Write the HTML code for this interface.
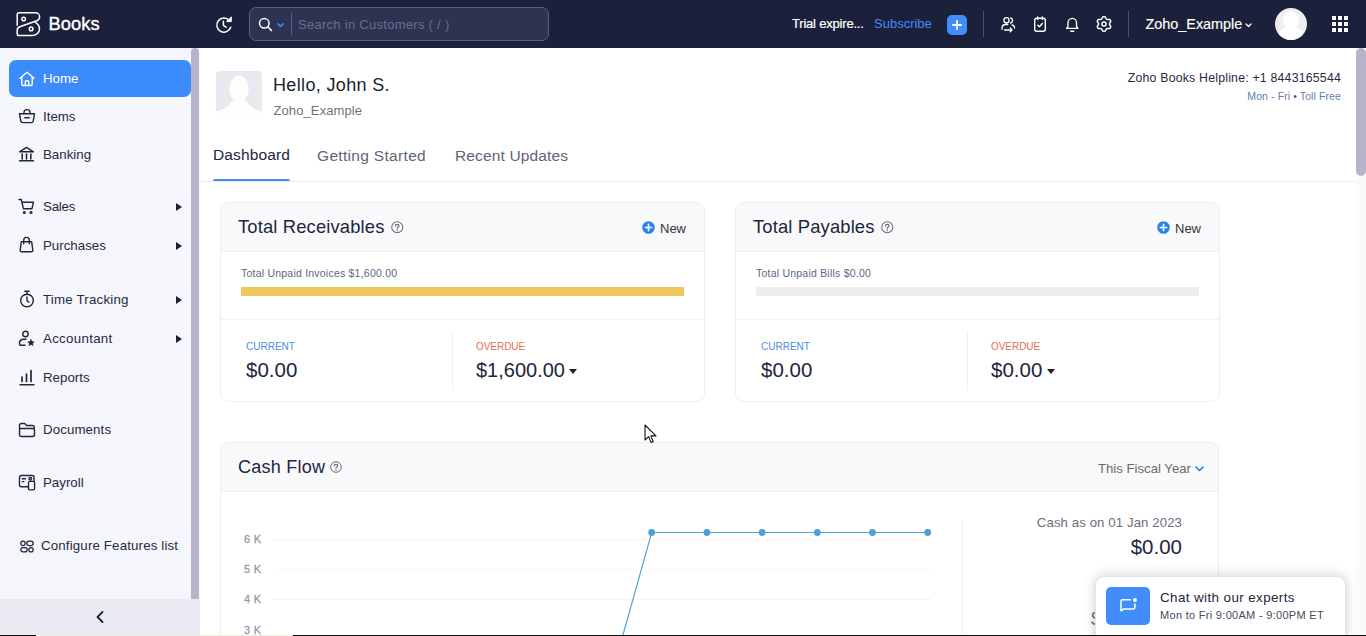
<!DOCTYPE html>
<html><head><meta charset="utf-8">
<style>
*{box-sizing:border-box;margin:0;padding:0}
html,body{width:1366px;height:636px;overflow:hidden;background:#fff;font-family:"Liberation Sans",sans-serif;color:#21263c}
.abs{position:absolute}
#top{position:absolute;left:0;top:0;width:1366px;height:47.600px;background:#1b213a}
#side{position:absolute;left:0;top:48px;width:200px;height:588px;background:#f5f5fc}
#main{position:absolute;left:200px;top:48px;width:1166px;height:588px;background:#fff}
.t{position:absolute;white-space:nowrap;line-height:1}
svg{position:absolute;overflow:visible}
.nav{position:absolute;left:43px;font-size:13.300px;color:#262b42;white-space:nowrap;line-height:1;letter-spacing:0}
.arr{position:absolute;left:176px;width:0;height:0;border-left:6.500px solid #1d2136;border-top:4px solid transparent;border-bottom:4px solid transparent}
.card{position:absolute;border:1px solid #ededf3;border-radius:9px;background:#fff;overflow:hidden}
.chead{position:absolute;left:0;top:0;right:0;height:49px;background:#f9f9fc;border-bottom:1px solid #efeff4}
</style></head><body>
<div id="top">
<!-- logo -->
<svg style="left:16px;top:12px" width="24" height="24" viewBox="0 0 24 24" fill="none" stroke="#fff" stroke-width="1.500" stroke-linecap="round" stroke-linejoin="round">
<path d="M1.200 13.200V2.600c0-1 .8-1.800 1.800-1.800h16.500c2.400 0 4.100 1.800 4.100 4 0 1.900-1.100 3.300-2.800 4L3.800 14.800C2.200 15.400 1.200 16.500 1.200 18.200v3.500c0 1 .8 1.800 1.800 1.800h13.500c4 0 7-3 7-6.600 0-2.800-1.500-5.200-4.500-7.100"/>
<circle cx="7.700" cy="7" r="1.800"/><circle cx="15.100" cy="16.900" r="1.800"/>
</svg>
<div class="t" style="left:48.600px;top:15px;font-size:18.300px;color:#fff;-webkit-text-stroke:.38px #fff;letter-spacing:.05px">Books</div>
<!-- history -->
<svg style="left:215px;top:16px" width="18" height="18" viewBox="0 0 18 18" fill="none" stroke="#fff" stroke-width="1.500" stroke-linecap="round" stroke-linejoin="round">
<path d="M14.200 4.300A7.100 7.100 0 1 0 15.700 11.300"/><path d="M16.300 1.300V5.600H12z" fill="#fff" stroke-width="1"/><path d="M8.400 5.300v4l2.600 1.900"/>
</svg>
<!-- search -->
<div class="abs" style="left:249px;top:7px;width:300px;height:34px;border:1px solid #586082;border-radius:7px;background:#2d3350"></div>
<svg style="left:258px;top:17px" width="15" height="15" viewBox="0 0 15 15" fill="none" stroke="#fff" stroke-width="1.500" stroke-linecap="round"><circle cx="6.300" cy="6.300" r="4.800"/><path d="M10 10l3.400 3.400"/></svg>
<svg style="left:277px;top:22.700px" width="7" height="5.200" viewBox="0 0 8 6" fill="none" stroke="#408dfb" stroke-width="1.700" stroke-linecap="round" stroke-linejoin="round"><path d="M1 1l3 3 3-3"/></svg>
<div class="abs" style="left:291px;top:13px;width:1px;height:22px;background:#566083"></div>
<div class="t" id="ph" style="left:298px;top:18px;font-size:13px;letter-spacing:.28px;color:#69708f">Search in Customers ( / )</div>
<!-- right -->
<div class="t" id="trial" style="left:792px;top:17px;-webkit-text-stroke:.2px #fff;font-size:13px;letter-spacing:-.2px;color:#fff">Trial expire...</div>
<div class="t" id="subs" style="left:874px;top:17px;font-size:13px;color:#408dfb">Subscribe</div>
<div class="abs" style="left:947px;top:14.500px;width:20px;height:20.500px;border-radius:5px;background:#408dfb"></div>
<svg style="left:952px;top:19.700px" width="10" height="10" viewBox="0 0 10 10" stroke="#fff" stroke-width="1.800" stroke-linecap="round"><path d="M5 1v8M1 5h8"/></svg>
<div class="abs" style="left:983px;top:11px;width:1px;height:26px;background:#4a5170"></div>
<!-- users icon -->
<svg style="left:1000.500px;top:16.200px" width="15" height="16" preserveAspectRatio="none" viewBox="0 0 17 17" fill="none" stroke="#fff" stroke-width="1.500" stroke-linecap="round" stroke-linejoin="round">
<circle cx="6.200" cy="4.600" r="2.900"/><path d="M1.200 14.200v-1.500c0-2.200 1.800-3.600 4-3.600h2.500"/><path d="M10.800 2c1.400.3 2.300 1.400 2.300 2.700s-.9 2.400-2.300 2.700"/><path d="M12.600 9.600c1.600.4 2.800 1.500 2.800 3.200"/><path d="M4 14.800h8.500M10.500 12.800l2 2-2 2"/>
</svg>
<!-- clipboard -->
<svg style="left:1032px;top:15px" width="16" height="18" viewBox="0 0 16 18" fill="none" stroke="#fff" stroke-width="1.400" stroke-linecap="round" stroke-linejoin="round">
<rect x="2.700" y="3.300" width="10.600" height="13" rx="2"/><path d="M5.700 2v2.600M10.300 2v2.600"/><path d="M5.800 10.200l1.600 1.600 3-3.200"/>
</svg>
<!-- bell -->
<svg style="left:1064.800px;top:15.600px" width="14.500" height="17" preserveAspectRatio="none" viewBox="0 0 16 18" fill="none" stroke="#fff" stroke-width="1.500" stroke-linecap="round" stroke-linejoin="round"><path d="M3.300 10.500V7.200a4.700 4.700 0 0 1 9.400 0v3.300c0 1 .6 1.700 1.600 2.600H1.700c1-.9 1.600-1.600 1.600-2.600z"/><path d="M6.300 16.200h3.400"/></svg>
<!-- gear -->
<svg style="left:1096.200px;top:16.200px" width="16" height="16" viewBox="0 0 16 16" fill="none" stroke="#fff" stroke-width="1.450" stroke-linejoin="round"><path d="M8.00 0.60 L8.39 0.64 L8.76 0.75 L9.12 0.95 L9.44 1.23 L9.67 1.77 L9.85 2.31 L10.06 2.62 L10.28 2.87 L10.51 3.07 L10.75 3.24 L11.01 3.36 L11.30 3.46 L11.62 3.52 L12.00 3.56 L12.56 3.44 L13.14 3.37 L13.55 3.51 L13.89 3.72 L14.18 3.99 L14.41 4.30 L14.57 4.65 L14.66 5.04 L14.67 5.44 L14.58 5.86 L14.23 6.33 L13.85 6.76 L13.69 7.10 L13.58 7.41 L13.52 7.71 L13.50 8.00 L13.52 8.29 L13.58 8.59 L13.69 8.90 L13.85 9.24 L14.23 9.67 L14.58 10.14 L14.67 10.56 L14.66 10.96 L14.57 11.35 L14.41 11.70 L14.18 12.01 L13.89 12.28 L13.55 12.49 L13.14 12.63 L12.56 12.56 L12.00 12.44 L11.62 12.48 L11.30 12.54 L11.01 12.64 L10.75 12.76 L10.51 12.93 L10.28 13.13 L10.06 13.38 L9.85 13.69 L9.67 14.23 L9.44 14.77 L9.12 15.05 L8.76 15.25 L8.39 15.36 L8.00 15.40 L7.61 15.36 L7.24 15.25 L6.88 15.05 L6.56 14.77 L6.33 14.23 L6.15 13.69 L5.94 13.38 L5.72 13.13 L5.49 12.93 L5.25 12.76 L4.99 12.64 L4.70 12.54 L4.38 12.48 L4.00 12.44 L3.44 12.56 L2.86 12.63 L2.45 12.49 L2.11 12.28 L1.82 12.01 L1.59 11.70 L1.43 11.35 L1.34 10.96 L1.33 10.56 L1.42 10.14 L1.77 9.67 L2.15 9.24 L2.31 8.90 L2.42 8.59 L2.48 8.29 L2.50 8.00 L2.48 7.71 L2.42 7.41 L2.31 7.10 L2.15 6.76 L1.77 6.33 L1.42 5.86 L1.33 5.44 L1.34 5.04 L1.43 4.65 L1.59 4.30 L1.82 3.99 L2.11 3.72 L2.45 3.51 L2.86 3.37 L3.44 3.44 L4.00 3.56 L4.38 3.52 L4.70 3.46 L4.99 3.36 L5.25 3.24 L5.49 3.07 L5.72 2.87 L5.94 2.62 L6.15 2.31 L6.33 1.77 L6.56 1.23 L6.88 0.95 L7.24 0.75 L7.61 0.64Z"/><circle cx="8" cy="8" r="2.100"/></svg>
<div class="abs" style="left:1128px;top:11px;width:1px;height:26px;background:#4a5170"></div>
<div class="t" id="org" style="left:1145.500px;top:17px;font-size:14.400px;-webkit-text-stroke:.15px #fff;color:#fff">Zoho_Example</div>
<svg style="left:1245px;top:22.500px" width="7" height="5" viewBox="0 0 7 5" fill="none" stroke="#fff" stroke-width="1.300" stroke-linecap="round" stroke-linejoin="round"><path d="M1 1l2.500 2.500L6 1"/></svg>
<!-- avatar -->
<div class="abs" style="left:1275px;top:8px;width:32px;height:32px;border-radius:50%;background:#eeeef2;overflow:hidden">
<div class="abs" style="left:8px;top:3px;width:16px;height:19px;border-radius:50%;background:#fff"></div>
<div class="abs" style="left:3px;top:19px;width:26px;height:20px;border-radius:10px 10px 0 0;background:#fff"></div>
</div>
<!-- grid -->
<svg style="left:1332px;top:16px" width="16" height="16" viewBox="0 0 16 16" fill="#fff"><rect x="0" y="0" width="4" height="4"/><rect x="6" y="0" width="4" height="4"/><rect x="12" y="0" width="4" height="4"/><rect x="0" y="6" width="4" height="4"/><rect x="6" y="6" width="4" height="4"/><rect x="12" y="6" width="4" height="4"/><rect x="0" y="12" width="4" height="4"/><rect x="6" y="12" width="4" height="4"/><rect x="12" y="12" width="4" height="4"/></svg>
</div>
<div id="side">
<div class="abs" style="left:9px;top:12px;width:182px;height:37px;border-radius:7px;background:#3c8bfb"></div>
<!-- home -->
<svg style="left:19px;top:22.8px" width="16" height="16" viewBox="0 0 16 16" fill="none" stroke="#fff" stroke-width="1.400" stroke-linecap="round" stroke-linejoin="round"><path d="M1 7.200L8 1.200l7 6"/><path d="M2.800 6v7.300c0 .7.500 1.200 1.200 1.200h8c.7 0 1.200-.5 1.200-1.200V6"/><path d="M6.300 14.300v-3.600c0-.5.400-.9.900-.9h1.600c.5 0 .9.400.9.900v3.600"/></svg>
<div class="nav" style="top:24px;color:#fff">Home</div>
<!-- items -->
<svg style="left:18px;top:59.8px" width="18" height="16" viewBox="0 0 18 16" stroke="#21263c" fill="none" stroke-width="1.400" stroke-linecap="round" stroke-linejoin="round"><path d="M1.500 5.800h15l-1.300 7.200c-.2 1-.9 1.600-1.900 1.600H4.700c-1 0-1.700-.6-1.900-1.600z"/><path d="M6 5.600V4.200c0-1.500 1.200-2.600 3-2.600s3 1.100 3 2.600v1.400"/><path d="M6.800 9.800h4.400"/></svg>
<div class="nav" style="top:62px">Items</div>
<!-- banking -->
<svg style="left:18px;top:97.8px" width="17" height="16" viewBox="0 0 17 16" stroke="#21263c" fill="none" stroke-width="1.400" stroke-linecap="round" stroke-linejoin="round"><path d="M1.500 5.800L8.500 1.300l7 4.500z"/><path d="M4.200 8v5M8.500 8v5M12.800 8v5" stroke-width="1.600"/><path d="M1.500 14.800h14"/></svg>
<div class="nav" style="top:100px">Banking</div>
<!-- sales -->
<svg style="left:18px;top:149.8px" width="17" height="17" viewBox="0 0 17 17" stroke="#21263c" fill="none" stroke-width="1.400" stroke-linecap="round" stroke-linejoin="round"><path d="M1 1.500h2.200l2.300 9.300h8.400l1.600-6.600H4.300"/><circle cx="6.300" cy="14.500" r=".9"/><circle cx="13" cy="14.500" r=".9"/></svg>
<div class="nav" style="top:152px;letter-spacing:-.2px">Sales</div><div class="arr" style="top:154.7px"></div>
<!-- purchases -->
<svg style="left:19px;top:187.8px" width="15" height="17" viewBox="0 0 15 17" stroke="#21263c" fill="none" stroke-width="1.400" stroke-linecap="round" stroke-linejoin="round"><path d="M2.300 5.800h10.400l1.100 8.300c.1 1-.6 1.700-1.500 1.700H2.700c-.9 0-1.600-.7-1.500-1.700z"/><path d="M4.700 7.800V4.200a2.800 2.800 0 0 1 5.600 0v3.600"/></svg>
<div class="nav" style="top:191px">Purchases</div><div class="arr" style="top:193.7px"></div>
<!-- time -->
<svg style="left:19px;top:241.8px" width="16" height="18" viewBox="0 0 16 18" stroke="#21263c" fill="none" stroke-width="1.400" stroke-linecap="round" stroke-linejoin="round"><circle cx="8" cy="10.500" r="6.300"/><path d="M8 7v3.700l1.800 1.500"/><path d="M5.800 1.300h4.400M8 1.500v2.500"/></svg>
<div class="nav" style="top:245px;letter-spacing:.2px">Time Tracking</div><div class="arr" style="top:247.7px"></div>
<!-- accountant -->
<svg style="left:18px;top:281.8px" width="18" height="17" viewBox="0 0 18 17" stroke="#21263c" fill="none" stroke-width="1.400" stroke-linecap="round" stroke-linejoin="round"><circle cx="7.500" cy="4" r="2.700"/><path d="M8 9.300H5.700c-2.400 0-4.200 1.600-4.200 3.800v1.200c0 .5.400.9.900.9H7"/><path d="M13 9.600l1 2 2.200.3-1.600 1.500.4 2.200-2-1.100-2 1.100.4-2.200-1.600-1.500 2.200-.3z" fill="#21263c" stroke-width=".6"/></svg>
<div class="nav" style="top:284px;letter-spacing:.3px">Accountant</div><div class="arr" style="top:286.7px"></div>
<!-- reports -->
<svg style="left:19px;top:320.8px" width="16" height="17" viewBox="0 0 16 17" stroke="#21263c" fill="none" stroke-width="1.400" stroke-linecap="round" stroke-linejoin="round"><path d="M3 8v4.500M7.500 5v7.500M12 1.500v11" stroke-width="1.700"/><path d="M1 15.700h14"/></svg>
<div class="nav" style="top:323px">Reports</div>
<!-- documents -->
<svg style="left:18px;top:373.8px" width="18" height="16" viewBox="0 0 18 16" stroke="#21263c" fill="none" stroke-width="1.400" stroke-linecap="round" stroke-linejoin="round"><path d="M1.500 6.500V3.300c0-1 .8-1.800 1.800-1.800h3.400l1.800 2h6c1 0 1.800.8 1.800 1.800v1.200"/><rect x="1.500" y="6.500" width="15" height="8" rx="1.800"/></svg>
<div class="nav" style="top:375px;letter-spacing:.1px">Documents</div>
<!-- payroll -->
<svg style="left:18px;top:425.8px" width="18" height="17" viewBox="0 0 18 17" stroke="#21263c" fill="none" stroke-width="1.400" stroke-linecap="round" stroke-linejoin="round"><path d="M10.500 12.700H3c-.9 0-1.500-.6-1.500-1.500V3c0-.9.600-1.500 1.500-1.500h11.500c.9 0 1.500.6 1.500 1.500v4"/><path d="M4.300 4.800h3.200M4.300 7.600h1.600"/><circle cx="12.300" cy="4.800" r="1.300"/><path d="M10.500 8.800c0-.8.600-1.400 1.400-1.400h3.300c.8 0 1.400.6 1.400 1.400v5.700c0 .8-.6 1.400-1.400 1.400h-3.300c-.8 0-1.400-.6-1.400-1.400z"/></svg>
<div class="nav" style="top:428px">Payroll</div>
<!-- configure -->
<svg style="left:19.500px;top:492.300px" width="14" height="13" viewBox="0 0 14 13" stroke="#21263c" fill="none" stroke-width="1.250" stroke-linecap="round" stroke-linejoin="round"><circle cx="3" cy="3.300" r="2.200"/><rect x="6.800" y="1.100" width="6.400" height="4.400" rx="2.200"/><rect x=".8" y="7.500" width="6.400" height="4.400" rx="2.200"/><circle cx="11" cy="9.700" r="2.200"/></svg>
<div class="nav" style="top:491px;left:41px;letter-spacing:.15px">Configure Features list</div>
<!-- scrollbar -->
<div class="abs" style="left:191px;top:0;width:8px;height:551px;border-radius:4px 4px 0 0;background:#b6b5c9"></div>
<!-- collapse -->
<div class="abs" style="left:0;top:551px;width:200px;height:37px;background:#eaeaf2"></div>
<svg style="left:96px;top:563px" width="8" height="12" viewBox="0 0 8 12" fill="none" stroke="#1d2136" stroke-width="1.800" stroke-linecap="round" stroke-linejoin="round"><path d="M6.500 1L1.500 6l5 5"/></svg>
</div>
<div id="main">
<!-- profile -->
<svg style="left:16px;top:23px" width="46" height="47" viewBox="0 0 46 47"><rect width="46" height="47" rx="4" fill="#e7e9ee"/><ellipse cx="23" cy="18" rx="9.800" ry="13.500" fill="#fdfdfe"/><path d="M0 47V40.500C7 38.500 12.500 36 15.500 30H30.500C33.500 36 39 38.500 46 40.500V47z" fill="#fdfdfe"/><rect y="41" width="46" height="6" rx="3" fill="#fdfdfe"/></svg>
<div class="t" style="left:73px;top:28px;font-size:18px;color:#1c1f2e;letter-spacing:.35px">Hello, John S.</div>
<div class="t" style="left:73.500px;top:56px;font-size:13px;color:#6e7280;letter-spacing:.1px">Zoho_Example</div>
<div class="t" style="right:25px;top:24px;font-size:12.300px;color:#262b3c;letter-spacing:.21px">Zoho Books Helpline: +1 8443165544</div>
<div class="t" style="right:25px;top:42.500px;font-size:10.500px;color:#5d7fae;letter-spacing:.1px">Mon - Fri <span style="color:#556">•</span> Toll Free</div>
<!-- tabs -->
<div class="t" style="left:13px;top:99px;font-size:15.500px;color:#21263c;letter-spacing:.13px">Dashboard</div>
<div class="t" style="left:117px;top:100px;font-size:15.500px;color:#5f6477;letter-spacing:.32px">Getting Started</div>
<div class="t" style="left:255px;top:100px;font-size:15.500px;color:#5f6477;letter-spacing:.14px">Recent Updates</div>
<div class="abs" style="left:13px;top:131px;width:77px;height:3px;border-radius:2px 2px 0 0;background:#408dfb"></div>
<div class="abs" style="left:0;top:133px;width:1156px;height:1px;background:#ebebf2"></div>
<!-- cards -->
<div class="card" style="left:20px;top:154px;width:485px;height:200px">
<div class="chead"></div>
<div class="t" style="left:17px;top:15px;font-size:18.400px;color:#21263c;letter-spacing:.14px">Total Receivables</div>
<svg style="left:170px;top:18.100px" width="12.500" height="12.500" viewBox="0 0 12 12" fill="none" stroke="#6d6d78" stroke-width="1"><circle cx="6" cy="6" r="5.300"/><path d="M4.300 4.800c0-1 .7-1.600 1.700-1.600s1.700.6 1.700 1.500c0 1.100-1.700 1.100-1.700 2.400" stroke-width="1.200" stroke-linecap="round"/><circle cx="6" cy="9" r=".75" fill="#6d6d78" stroke="none"/></svg>
<svg style="left:421px;top:18px" width="13" height="13" viewBox="0 0 13 13"><circle cx="6.500" cy="6.500" r="6.300" fill="#2485e8"/><path d="M6.500 3.400v6.200M3.400 6.500h6.200" stroke="#fff" stroke-width="1.700" stroke-linecap="round"/></svg><div class="t" style="left:439px;top:19px;font-size:13px;color:#333">New</div>
<div class="t" style="left:20px;top:65px;font-size:10.500px;color:#5a6684;letter-spacing:.22px">Total Unpaid Invoices $1,600.00</div>
<div class="abs" style="left:20px;top:84px;width:443px;height:9px;background:#eec85f"></div>
<div class="abs" style="left:0;top:116px;width:486px;height:1px;background:#efeff4"></div>
<div class="t" style="left:25px;top:139px;font-size:10px;color:#4a8fe0;letter-spacing:0">CURRENT</div>
<div class="t" style="left:25px;top:157px;font-size:20.500px;color:#21263c">$0.00</div>
<div class="abs" style="left:231px;top:128px;width:1px;height:60px;background:#efeff4"></div>
<div class="t" style="left:255px;top:139px;font-size:10px;color:#e26f55;letter-spacing:-.05px">OVERDUE</div>
<div class="t" style="left:255px;top:157px;font-size:20px;color:#21263c">$1,600.00</div>
<div class="abs" style="left:348px;top:165.500px;width:0;height:0;border-top:5.500px solid #222;border-left:4px solid transparent;border-right:4px solid transparent"></div>
</div>
<div class="card" style="left:535px;top:154px;width:485px;height:200px">
<div class="chead"></div>
<div class="t" style="left:17px;top:15px;font-size:18.400px;color:#21263c;letter-spacing:.14px">Total Payables</div>
<svg style="left:145px;top:18.100px" width="12.500" height="12.500" viewBox="0 0 12 12" fill="none" stroke="#6d6d78" stroke-width="1"><circle cx="6" cy="6" r="5.300"/><path d="M4.300 4.800c0-1 .7-1.600 1.700-1.600s1.700.6 1.700 1.500c0 1.100-1.700 1.100-1.700 2.400" stroke-width="1.200" stroke-linecap="round"/><circle cx="6" cy="9" r=".75" fill="#6d6d78" stroke="none"/></svg>
<svg style="left:421px;top:18px" width="13" height="13" viewBox="0 0 13 13"><circle cx="6.500" cy="6.500" r="6.300" fill="#2485e8"/><path d="M6.500 3.400v6.200M3.400 6.500h6.200" stroke="#fff" stroke-width="1.700" stroke-linecap="round"/></svg><div class="t" style="left:439px;top:19px;font-size:13px;color:#333">New</div>
<div class="t" style="left:20px;top:65px;font-size:10.500px;color:#5a6684;letter-spacing:.22px">Total Unpaid Bills $0.00</div>
<div class="abs" style="left:20px;top:84px;width:443px;height:9px;background:#ededf1"></div>
<div class="abs" style="left:0;top:116px;width:486px;height:1px;background:#efeff4"></div>
<div class="t" style="left:25px;top:139px;font-size:10px;color:#4a8fe0;letter-spacing:0">CURRENT</div>
<div class="t" style="left:25px;top:157px;font-size:20.500px;color:#21263c">$0.00</div>
<div class="abs" style="left:231px;top:128px;width:1px;height:60px;background:#efeff4"></div>
<div class="t" style="left:255px;top:139px;font-size:10px;color:#e26f55;letter-spacing:-.05px">OVERDUE</div>
<div class="t" style="left:255px;top:157px;font-size:20.500px;color:#21263c">$0.00</div>
<div class="abs" style="left:310.500px;top:165.500px;width:0;height:0;border-top:5.500px solid #222;border-left:4px solid transparent;border-right:4px solid transparent"></div>
</div>
<!-- cashflow -->
<div class="card" style="left:20px;top:394px;width:999px;height:300px">
<div class="chead" style="height:49px"></div>
<div class="t" style="left:17px;top:15px;font-size:18px;color:#21263c;letter-spacing:.25px">Cash Flow</div>
<svg style="left:109.400px;top:17.500px" width="12" height="12" viewBox="0 0 12 12" fill="none" stroke="#6d6d78" stroke-width="1"><circle cx="6" cy="6" r="5.300"/><path d="M4.300 4.800c0-1 .7-1.600 1.700-1.600s1.700.6 1.700 1.500c0 1.100-1.700 1.100-1.700 2.400" stroke-width="1.200" stroke-linecap="round"/><circle cx="6" cy="9" r=".75" fill="#6d6d78" stroke="none"/></svg>
<div class="t" style="right:27px;top:19px;font-size:13.200px;color:#6e6a66">This Fiscal Year</div>
<svg style="left:974px;top:23px" width="9" height="6" viewBox="0 0 9 6" fill="none" stroke="#2f86e0" stroke-width="1.700" stroke-linecap="round" stroke-linejoin="round"><path d="M1 1l3.500 3.500L8 1"/></svg>
<div class="t" style="left:23px;top:91px;font-size:11px;color:#9898a4;-webkit-text-stroke:.3px #9898a4;letter-spacing:.25px">6 K</div>
<div class="t" style="left:23px;top:121px;font-size:11px;color:#9898a4;-webkit-text-stroke:.3px #9898a4;letter-spacing:.25px">5 K</div>
<div class="t" style="left:23px;top:151px;font-size:11px;color:#9898a4;-webkit-text-stroke:.3px #9898a4;letter-spacing:.25px">4 K</div>
<div class="t" style="left:23px;top:182px;font-size:11px;color:#9898a4;-webkit-text-stroke:.3px #9898a4;letter-spacing:.25px">3 K</div>
<svg style="left:0;top:0" width="1000" height="200" viewBox="0 0 1000 200" fill="none">
<g stroke="#d9d9e0" stroke-width="1" stroke-dasharray="1 3"><path d="M52 96.500H710M56 126.500H710M52 156.500H710"/></g>
<path d="M399.700 200L430.700 89.500H706.700" stroke="#56a5d8" stroke-width="1.200"/>
<g fill="#4f9fd6"><circle cx="430.7" cy="89.500" r="3.400"/><circle cx="485.9" cy="89.500" r="3.400"/><circle cx="541.1" cy="89.500" r="3.400"/><circle cx="596.3" cy="89.500" r="3.400"/><circle cx="651.5" cy="89.500" r="3.400"/><circle cx="706.7" cy="89.500" r="3.400"/></g>
</svg>
<div class="abs" style="left:741px;top:78px;width:1px;height:230px;background:#ececf1"></div>
<div class="t" style="right:36px;top:73px;font-size:13.200px;color:#6a6e7c;letter-spacing:.1px">Cash as on 01 Jan 2023</div>
<div class="t" style="right:36px;top:94px;font-size:20.500px;color:#21263c">$0.00</div>
</div>
<div class="t" style="left:891px;top:561px;font-size:19px;color:#6a6f80">$</div>
<!-- chat -->
<div class="abs" style="left:895px;top:528px;width:251px;height:70px;border:1px solid #e2e2ea;border-radius:9px;background:#fff;box-shadow:0 0 12px rgba(60,60,100,.26)"></div>
<div class="abs" style="left:906px;top:539px;width:44px;height:38px;border-radius:5px;background:#408dfb"></div>
<svg style="left:919px;top:548.500px" width="19.500" height="18.400" viewBox="0 0 18 17" fill="none" stroke="#fff" stroke-width="1.400" stroke-linecap="round" stroke-linejoin="round"><path d="M10.500 2.500H3.300c-.8 0-1.500.7-1.500 1.500v8.800l2.600-1.800h8.800c.8 0 1.500-.7 1.500-1.500V6.500"/><circle cx="14.700" cy="2.800" r="1.100" fill="#fff"/></svg>
<div class="t" style="left:960px;top:543px;font-size:13.400px;color:#21263c;letter-spacing:.4px">Chat with our experts</div>
<div class="t" style="left:960px;top:562px;font-size:11px;color:#454a5c;letter-spacing:.3px">Mon to Fri 9:00AM - 9:00PM ET</div>
<!-- main scrollbar -->
<div class="abs" style="left:1156px;top:0;width:10px;height:588px;background:#fafafc"></div>
<div class="abs" style="left:1156px;top:0;width:10px;height:128px;border-radius:5px;background:#b5b4c9"></div>
<!-- cursor -->
<svg style="left:444px;top:376px" width="13" height="20" viewBox="0 0 13 20"><path d="M1 1v15l3.600-3.400 2.500 6 2.200-.9-2.500-5.800H12z" fill="#fff" stroke="#111" stroke-width="1.100" stroke-linejoin="round"/></svg>
</div>
<div class="abs" style="left:0;top:635px;width:36px;height:1px;background:#111"></div><div class="abs" style="left:36px;top:635px;width:257px;height:1px;background:#eeeedd"></div><div class="abs" style="left:293px;top:635px;width:1073px;height:1px;background:#111"></div>
</body></html>
